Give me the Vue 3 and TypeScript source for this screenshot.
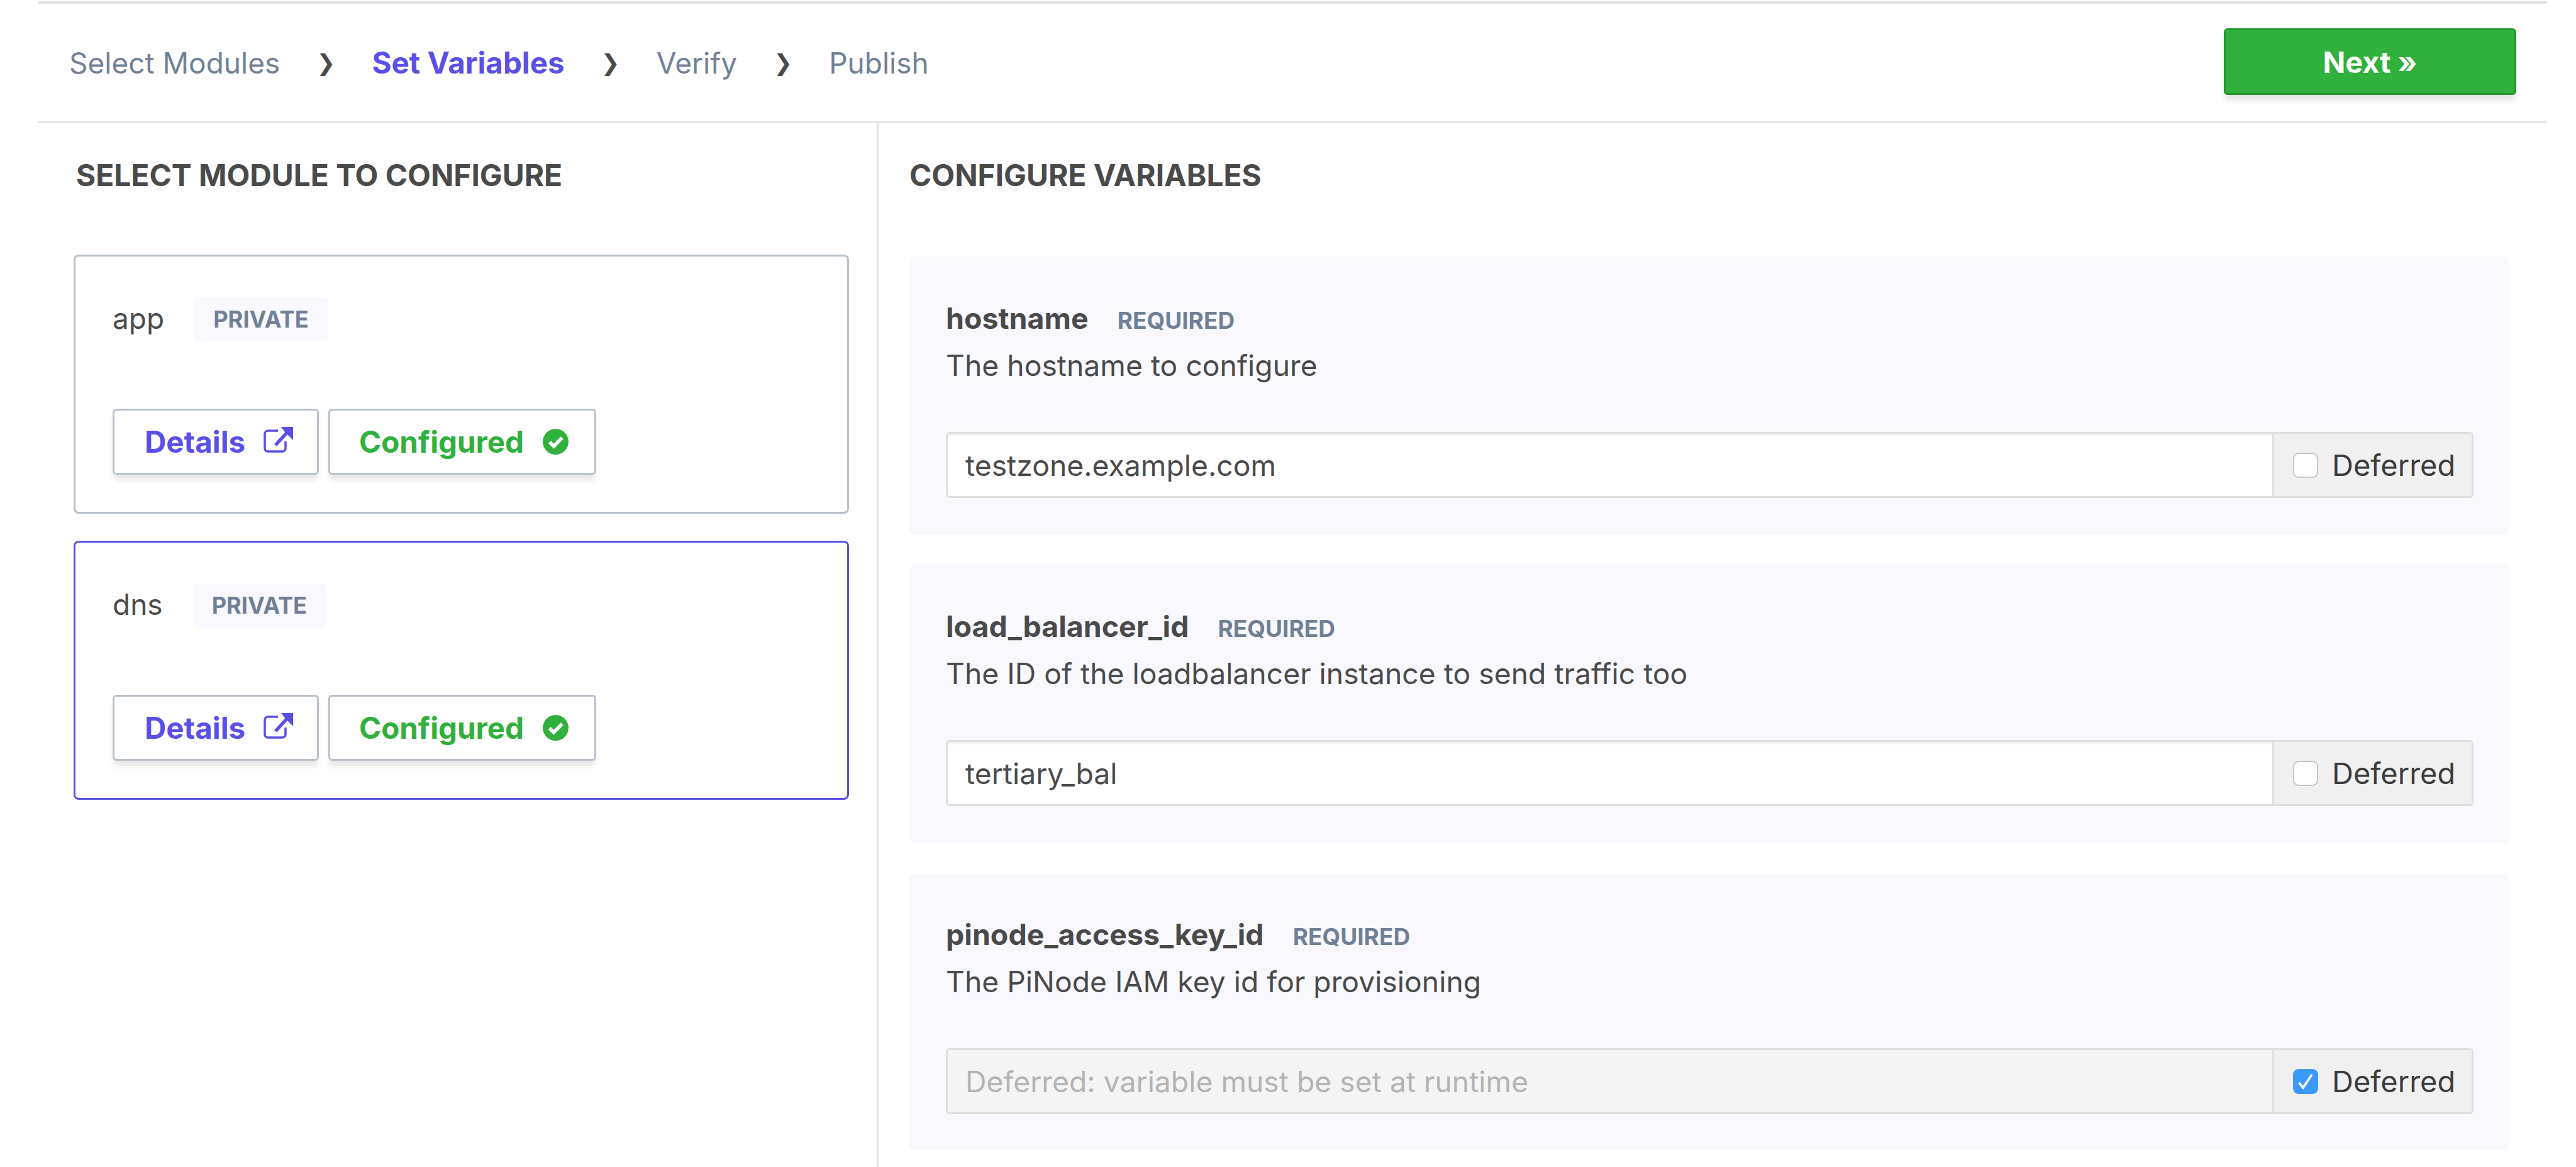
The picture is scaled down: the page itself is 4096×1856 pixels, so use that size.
<script setup lang="ts">
interface Step {
  label: string;
  active?: boolean;
}

interface Variable {
  name: string;
  description: string;
  value: string;
  deferred: boolean;
}

const steps: Step[] = [
  { label: 'Select Modules' },
  { label: 'Set Variables', active: true },
  { label: 'Verify' },
  { label: 'Publish' },
];

const modules = [
  { name: 'app', selected: false },
  { name: 'dns', selected: true },
];

const variables: Variable[] = [
  { name: 'hostname', description: 'The hostname to configure', value: 'testzone.example.com', deferred: false },
  { name: 'load_balancer_id', description: 'The ID of the loadbalancer instance to send traffic too', value: 'tertiary_bal', deferred: false },
  { name: 'pinode_access_key_id', description: 'The PiNode IAM key id for provisioning', value: '', deferred: true },
];
</script>

<template>
  <div class="page">
    <nav class="topbar">
      <div class="steps">
        <template v-for="(step, index) in steps" :key="step.label">
          <span v-if="index > 0" class="chevron">❯</span>
          <span class="step" :class="{ active: step.active }">{{ step.label }}</span>
        </template>
      </div>
      <button class="btn-next">Next »</button>
    </nav>

    <main class="columns">
      <section class="col-modules">
        <h2 class="heading">SELECT MODULE TO CONFIGURE</h2>
        <div class="module-list">
          <article v-for="mod in modules" :key="mod.name" class="module" :class="{ selected: mod.selected }">
            <div class="module-head">
              <span class="module-name">{{ mod.name }}</span>
              <span class="badge">PRIVATE</span>
            </div>
            <div class="module-actions">
              <button class="btn btn-details">
                Details
                <svg class="icon-external" viewBox="0 0 47 41" aria-hidden="true">
                  <path d="M23 6H7A5 5 0 0 0 2 11V34A5 5 0 0 0 7 39H30A5 5 0 0 0 35 34V23" fill="none" stroke="currentColor" stroke-width="3.500" />
                  <path d="M19 29L39 7" fill="none" stroke="currentColor" stroke-width="5.500" />
                  <path d="M28 0H47V21L40 14L33 7Z" fill="currentColor" />
                </svg>
              </button>
              <button class="btn btn-configured">
                Configured
                <svg class="icon-check" viewBox="0 0 40 40" aria-hidden="true">
                  <circle cx="20" cy="20" r="20" fill="currentColor" />
                  <path d="M10.500 20.500L17 27L30 14" fill="none" stroke="#fff" stroke-width="5.500" />
                </svg>
              </button>
            </div>
          </article>
        </div>
      </section>

      <section class="col-variables">
        <h2 class="heading">CONFIGURE VARIABLES</h2>
        <div class="variable-list">
          <article v-for="item in variables" :key="item.name" class="variable">
            <div class="variable-title">
              <span class="variable-name">{{ item.name }}</span>
              <span class="required">REQUIRED</span>
            </div>
            <p class="variable-desc">{{ item.description }}</p>
            <div class="input-group" :class="{ disabled: item.deferred }">
              <input
                class="input"
                type="text"
                :value="item.value"
                :disabled="item.deferred"
                placeholder="Deferred: variable must be set at runtime"
              />
              <label class="addon">
                <span class="checkbox" :class="{ checked: item.deferred }">
                  <svg v-if="item.deferred" viewBox="0 0 40 40" aria-hidden="true">
                    <path d="M9.500 22L16 30L30 9" fill="none" stroke="#fff" stroke-width="3.600" />
                  </svg>
                </span>
                Deferred
              </label>
            </div>
          </article>
        </div>
      </section>
    </main>
  </div>
</template>

<style>
html,
body {
  background: #fff;
}
</style>

<style scoped>
.page {
  box-sizing: border-box;
  height: 1856px;
  margin: 0 46px 0 60px;
  padding-top: 2px;
  display: flex;
  flex-direction: column;
  overflow: hidden;
  font-family: Inter, "Liberation Sans", sans-serif;
  color: #4a4a4a;
}

.topbar {
  flex: none;
  box-sizing: border-box;
  height: 194px;
  padding: 0 49px 0 50px;
  display: flex;
  align-items: center;
  justify-content: space-between;
  border-top: 4px solid #e3e3e3;
  border-bottom: 3px solid #e3e3e3;
}

.steps {
  display: flex;
  align-items: center;
  gap: 58px;
  font-size: 46px;
  color: #718096;
}

.step.active {
  font-size: 47.500px;
  font-weight: 700;
  color: #5a4fe6;
}

.chevron {
  font-family: "DejaVu Sans", sans-serif;
  font-size: 36px;
  color: #4a4a4a;
}

.btn-next {
  width: 465px;
  height: 106px;
  margin-top: -3px;
  border: 3px solid #26962f;
  border-radius: 6px;
  background: #30b03c;
  color: #fff;
  font: 700 47px Inter, "Liberation Sans", sans-serif;
  box-shadow: 0 10px 10px -2px rgba(0, 0, 0, 0.12);
}

.columns {
  flex: 1;
  display: grid;
  grid-template-columns: 1337px 1fr;
}

.col-modules {
  border-right: 3px solid #e3e3e3;
  padding: 0 0 0 58px;
}

.col-variables {
  padding-left: 49px;
}

.heading {
  margin: 0;
  height: 213px;
  padding-top: 55px;
  box-sizing: border-box;
  font-size: 47.800px;
  line-height: 56px;
  font-weight: 700;
  color: #4a4a4a;
}

.col-modules .heading {
  padding-left: 3px;
}

.module-list {
  display: flex;
  flex-direction: column;
  gap: 43px;
  margin-left: -1px;
  margin-top: -4px;
}

.module {
  box-sizing: border-box;
  width: 1233px;
  height: 412px;
  border: 3px solid #b8c2cc;
  border-radius: 8px;
  padding: 65px 0 0 59px;
  display: flex;
  flex-direction: column;
}

.module.selected {
  border-color: #5a4fe6;
}

.module-head {
  height: 70px;
  display: flex;
  align-items: center;
  gap: 48px;
}

.module-name {
  font-size: 46px;
  margin-top: -4px;
}

.badge {
  height: 70px;
  padding: 0 30px;
  display: flex;
  align-items: center;
  border-radius: 6px;
  background: #f8f8fe;
  color: #718096;
  font-size: 36.200px;
  font-weight: 700;
}

.module-actions {
  margin-top: 107px;
  display: flex;
  gap: 15px;
}

.btn {
  box-sizing: border-box;
  height: 105px;
  border: 3px solid #b8c2cc;
  border-radius: 6px;
  background: #fff;
  display: flex;
  align-items: center;
  font: 700 47.500px Inter, "Liberation Sans", sans-serif;
  box-shadow: 0 10px 10px -2px rgba(0, 0, 0, 0.1);
}

.btn-details {
  width: 328px;
  padding: 0 0 0 48px;
  gap: 29px;
  color: #5a4fe6;
}

.btn-configured {
  width: 426px;
  padding: 0 0 0 46px;
  gap: 30px;
  color: #30b03c;
}

.icon-external {
  width: 47px;
  height: 41px;
  margin-top: -6px;
}

.icon-check {
  width: 41px;
  height: 41px;
}

.variable-list {
  display: flex;
  flex-direction: column;
  gap: 47px;
  margin-top: -1px;
}

.variable {
  box-sizing: border-box;
  width: 2543px;
  height: 443px;
  padding: 70px 56px 0 58px;
  border-radius: 8px;
  background: #f8f8fe;
}

.variable-title {
  display: flex;
  align-items: baseline;
  gap: 46px;
  line-height: 56px;
}

.variable-name {
  font-size: 46.500px;
  font-weight: 700;
}

.required {
  font-size: 37px;
  font-weight: 700;
  color: #718096;
}

.variable-desc {
  margin: 15px 0 0;
  font-size: 46.300px;
  line-height: 56px;
}

.input-group {
  box-sizing: border-box;
  margin: 78px 0 0;
  height: 105px;
  display: flex;
  border: 3px solid #dedede;
  border-radius: 6px;
  overflow: hidden;
}

.input {
  flex: 1;
  min-width: 0;
  box-sizing: border-box;
  height: 100%;
  padding: 0 28px;
  border: none;
  outline: none;
  background: #fff;
  box-shadow: inset 0 4px 4px -2px rgba(0, 0, 0, 0.08);
  color: #4a4a4a;
  font: 400 46.300px Inter, "Liberation Sans", sans-serif;
}

.input::placeholder {
  color: #b3b3b3;
  opacity: 1;
}

.input:disabled {
  background: #f4f4f4;
  box-shadow: none;
}

.addon {
  flex: none;
  box-sizing: border-box;
  width: 317px;
  padding-left: 30px;
  display: flex;
  align-items: center;
  gap: 22px;
  border-left: 3px solid #dedede;
  background: #f0f0f0;
  font-size: 47px;
  color: #3c3c3c;
}

.checkbox {
  box-sizing: border-box;
  width: 40px;
  height: 40px;
  border: 2px solid #c4c4c4;
  border-radius: 9px;
  background: #fff;
}

.checkbox.checked {
  border: none;
  background: #3b99fc;
}

.checkbox svg {
  display: block;
}
</style>
